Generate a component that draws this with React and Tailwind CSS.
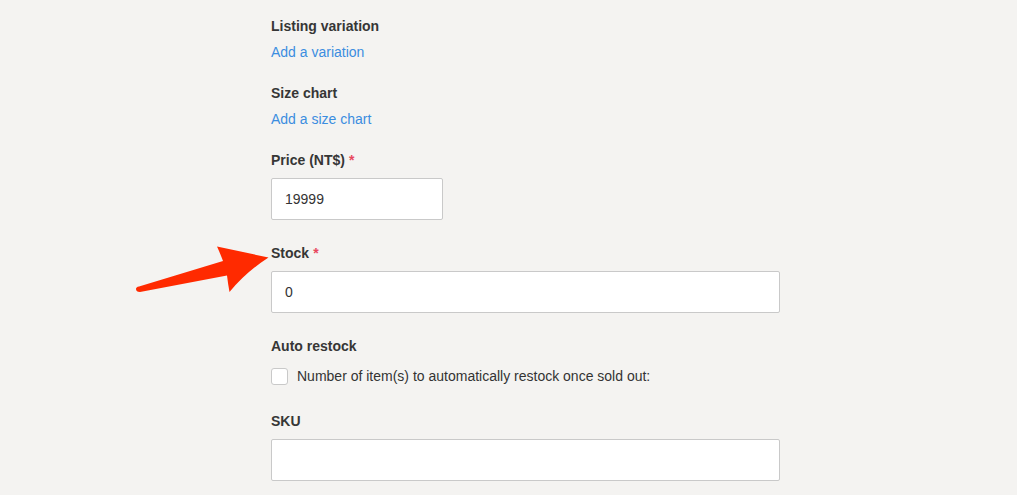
import React from "react";

function Label({ children, required }) {
  return (
    <div className="text-[14px] leading-[20px] font-bold text-[#363636]">
      {children}
      {required && <span className="ml-[4px] text-[#e8475d]">*</span>}
    </div>
  );
}

function TextBox({ value, width }) {
  return (
    <div
      className={`${width} h-[42px] bg-white border border-[#c9c9c9] rounded-[2px] flex items-center px-[13px] text-[14px] text-[#333]`}
    >
      {value}
    </div>
  );
}

export default function App() {
  return (
    <div
      className="relative w-[1017px] h-[495px] bg-[#f4f3f1] overflow-hidden"
      style={{ fontFamily: '"Liberation Sans", Arial, sans-serif' }}
    >
      <div className="ml-[271px] w-[509px] pt-[16px] flex flex-col">
        <Label>Listing variation</Label>
        <div className="mt-[6px] text-[14px] leading-[20px] text-[#3b8de0]">Add a variation</div>

        <div className="mt-[21px]">
          <Label>Size chart</Label>
        </div>
        <div className="mt-[6px] text-[14px] leading-[20px] text-[#3b8de0]">Add a size chart</div>

        <div className="mt-[21px]">
          <Label required>Price (NT$)</Label>
        </div>
        <div className="mt-[8px]">
          <TextBox value="19999" width="w-[172px]" />
        </div>

        <div className="mt-[23px]">
          <Label required>Stock</Label>
        </div>
        <div className="mt-[8px]">
          <TextBox value="0" width="w-[509px]" />
        </div>

        <div className="mt-[23px]">
          <Label>Auto restock</Label>
        </div>
        <div className="mt-[10px] flex items-center gap-[9px] h-[20px]">
          <div className="w-[17px] h-[17px] bg-white border border-[#c9c9c9] rounded-[3px]" />
          <span className="text-[14px] text-[#333]">
            Number of item(s) to automatically restock once sold out:
          </span>
        </div>

        <div className="mt-[25px]">
          <Label>SKU</Label>
        </div>
        <div className="mt-[8px]">
          <TextBox value="" width="w-[509px]" />
        </div>
      </div>

      {/* annotation arrow */}
      <svg className="absolute left-0 top-0" width="1017" height="495" viewBox="0 0 1017 495">
        <path
          d="M136 289 Q136 287 139 286.5 L223 261 Q220 253 217 246.5 L268.5 257.5 Q246 272 229.5 292 Q228 284 227 275.5 L140 292 Q136 292 136 289 Z"
          fill="#ff2a00"
        />
      </svg>
    </div>
  );
}
